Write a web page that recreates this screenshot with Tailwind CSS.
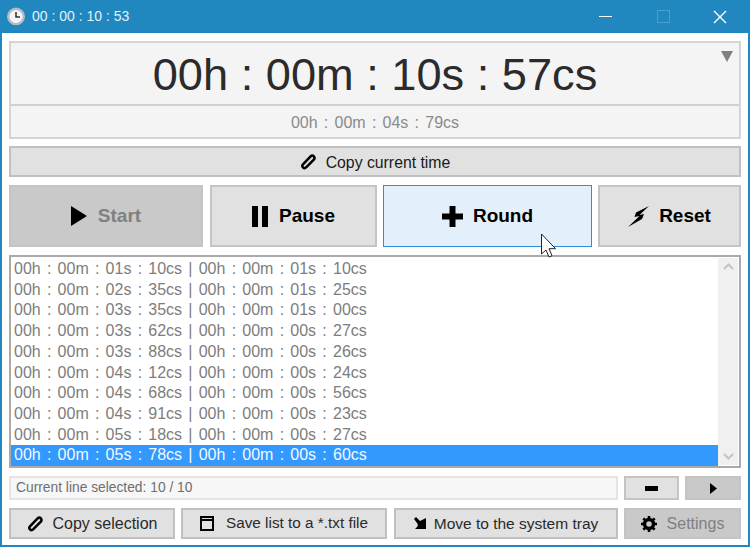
<!DOCTYPE html>
<html lang="en">
<head>
<meta charset="UTF-8">
<title>Stopwatch</title>
<script src="https://cdn.jsdelivr.net/npm/@tailwindcss/browser@4"></script>
</head>
<body class="bg-white font-['Liberation_Sans',sans-serif] overflow-hidden">
<div class="relative w-[750px] h-[547px] flex flex-col border-x-2 border-b-2 border-[#2187bf] bg-white">
  <!-- title bar -->
  <div class="-mx-[2px] h-[33px] shrink-0 bg-[#2187bf] flex items-center text-white">
    <svg class="ml-[6px] w-[20px] h-[20px]" viewBox="0 0 20 20">
      <circle cx="10" cy="9.500" r="9" fill="#b4bcc8"/>
      <circle cx="10" cy="9.500" r="6.500" fill="#f6f6f6"/>
      <path d="M10 5v5h4" fill="none" stroke="#333" stroke-width="1.500"/>
      <path d="M4 18.500h12" stroke="#5a6a9a" stroke-width="1"/>
    </svg>
    <span class="ml-[6px] text-[14px] text-[#e3f1f9]">00 : 00 : 10 : 53</span>
    <div class="ml-auto flex items-center h-full">
      <div class="w-[58px] flex justify-center"><div class="w-[13px] h-[1.5px] bg-white"></div></div>
      <div class="w-[58px] flex justify-center"><div class="w-[13px] h-[13px] border border-[#4a9fce]"></div></div>
      <div class="w-[58px] pr-[2px] flex justify-center">
        <svg class="w-[14px] h-[14px]" viewBox="0 0 14 14"><path d="M1 1l12 12M13 1L1 13" stroke="#fff" stroke-width="1.400"/></svg>
      </div>
    </div>
  </div>

  <div class="flex-1 flex flex-col px-[7px] pt-[8px]">
    <!-- time display -->
    <div class="relative h-[98px] flex flex-col border-2 border-[#d4d4d4] bg-[#f4f4f4]">
      <div class="h-[63px] pt-[3px] flex items-center justify-center border-b-2 border-[#d0d0d0] text-[45.2px] text-[#2b2b2b]">00h : 00m : 10s : 57cs</div>
      <div class="flex-1 pt-[2px] flex items-center justify-center text-[16px] [word-spacing:1.8px] text-[#8a8a8a]">00h : 00m : 04s : 79cs</div>
      <div class="absolute top-[8px] right-[6px] w-0 h-0 border-x-[6px] border-x-transparent border-t-[11px] border-t-[#808080]"></div>
    </div>

    <!-- copy current -->
    <div class="mt-[7px] h-[31px] pt-[2px] flex items-center justify-center gap-[9px] border-2 border-[#c0c0c0] bg-[#e1e1e1] text-[15.8px] text-[#1a1a1a]">
      <svg class="w-[17px] h-[17px] -mt-[2px]" viewBox="0 0 16 16"><path d="M3 10.500L10 3.200c1-1 2.200-1 3 0 .8.8.8 2 0 3L6 13.300c-1 1-2.400 1-3.200.2-.8-.9-.8-2 .2-3z" fill="none" stroke="#000" stroke-width="2.400"/></svg>
      <span>Copy current time</span>
    </div>

    <!-- main buttons -->
    <div class="mt-[8px] h-[62px] flex gap-[6px] text-[19px] font-bold">
      <div class="w-[194px] mr-[1px] flex items-center justify-center gap-[11px] border-2 border-[#c4c4c4] bg-[#c9c9c9] text-[#808080]">
        <svg class="w-[16px] h-[20px]" viewBox="0 0 16 20"><path d="M0 0l16 10L0 20z" fill="#000"/></svg>
        <span>Start</span>
      </div>
      <div class="w-[167px] flex items-center justify-center gap-[11px] border-2 border-[#c4c4c4] bg-[#e1e1e1] text-black">
        <svg class="w-[16px] h-[21px]" viewBox="0 0 16 21"><path d="M0 0h6v21H0zM10 0h6v21h-6z" fill="#000"/></svg>
        <span>Pause</span>
      </div>
      <div class="w-[209px] flex items-center justify-center gap-[10px] border border-[#2d8fdb] bg-[#e3f0fc] text-black">
        <svg class="w-[21px] h-[21px]" viewBox="0 0 21 21"><path d="M7.500 0h6v7.500H21v6h-7.500V21h-6v-7.500H0v-6h7.500z" fill="#000"/></svg>
        <span>Round</span>
      </div>
      <div class="w-[143px] flex items-center justify-center gap-[10px] border-2 border-[#c4c4c4] bg-[#e1e1e1] text-black">
        <svg class="w-[21px] h-[21px]" viewBox="0 0 21 21"><path d="M21 0L8 6.500 6.500 11l5-1L0 21l14-8 2-5-4.500 1z" fill="#000"/></svg>
        <span>Reset</span>
      </div>
    </div>

    <!-- rounds list -->
    <div class="mt-[8px] h-[213px] flex border-2 border-[#aaaaaa] bg-white">
      <div class="flex-1 flex flex-col pt-[2px] text-[16px] leading-[20.7px] [word-spacing:1.78px] text-[#7d7d7d] whitespace-pre">
        <div class="pl-[3px]">00h : 00m : 01s : 10cs | 00h : 00m : 01s : 10cs</div>
        <div class="pl-[3px]">00h : 00m : 02s : 35cs | 00h : 00m : 01s : 25cs</div>
        <div class="pl-[3px]">00h : 00m : 03s : 35cs | 00h : 00m : 01s : 00cs</div>
        <div class="pl-[3px]">00h : 00m : 03s : 62cs | 00h : 00m : 00s : 27cs</div>
        <div class="pl-[3px]">00h : 00m : 03s : 88cs | 00h : 00m : 00s : 26cs</div>
        <div class="pl-[3px]">00h : 00m : 04s : 12cs | 00h : 00m : 00s : 24cs</div>
        <div class="pl-[3px]">00h : 00m : 04s : 68cs | 00h : 00m : 00s : 56cs</div>
        <div class="pl-[3px]">00h : 00m : 04s : 91cs | 00h : 00m : 00s : 23cs</div>
        <div class="pl-[3px]">00h : 00m : 05s : 18cs | 00h : 00m : 00s : 27cs</div>
        <div class="pl-[3px] bg-[#3399ff] text-[#f2f8ff]">00h : 00m : 05s : 78cs | 00h : 00m : 00s : 60cs</div>
      </div>
      <div class="w-[20px] my-[1px] mr-[1px] bg-[#f0f0f0] flex flex-col justify-between items-center py-[5px]">
        <svg class="w-[11px] h-[7px]" viewBox="0 0 11 7"><path d="M1 6l4.500-4.500L10 6" fill="none" stroke="#c4c4c4" stroke-width="2"/></svg>
        <svg class="w-[11px] h-[7px]" viewBox="0 0 11 7"><path d="M1 1l4.500 4.500L10 1" fill="none" stroke="#c4c4c4" stroke-width="2"/></svg>
      </div>
    </div>

    <!-- status row -->
    <div class="mt-[8px] h-[24px] flex gap-[6px]">
      <div class="w-[609px] flex items-center pl-[5px] border-2 border-[#e4e4e4] bg-[#f7f7f7] text-[13.8px] text-[#6e6e6e]">Current line selected: 10 / 10</div>
      <div class="w-[55px] flex items-center justify-center border-2 border-[#c4c4c4] bg-[#e1e1e1]"><div class="w-[13px] h-[5px] bg-black"></div></div>
      <div class="w-[56px] flex items-center justify-center border-2 border-[#c4c4c4] bg-[#c9c9c9]"><svg class="w-[7px] h-[11px]" viewBox="0 0 7 11"><path d="M0 0l7 5.500L0 11z" fill="#000"/></svg></div>
    </div>

    <!-- bottom buttons -->
    <div class="mt-[8px] h-[31px] flex gap-[6px] text-[16px] text-[#2a2a2a]">
      <div class="w-[166px] flex items-center justify-center gap-[9px] border-2 border-[#c0c0c0] bg-[#e1e1e1]">
        <svg class="w-[17px] h-[17px]" viewBox="0 0 16 16"><path d="M3 10.500L10 3.200c1-1 2.200-1 3 0 .8.8.8 2 0 3L6 13.300c-1 1-2.400 1-3.200.2-.8-.9-.8-2 .2-3z" fill="none" stroke="#000" stroke-width="2.400"/></svg>
        <span>Copy selection</span>
      </div>
      <div class="w-[206px] mr-[1px] flex items-center justify-center gap-[12px] border-2 border-[#c0c0c0] bg-[#e1e1e1] text-[15.3px]">
        <svg class="w-[14px] h-[15px]" viewBox="0 0 14 15"><path d="M1 1h12v13H1z" fill="none" stroke="#000" stroke-width="2"/><path d="M1 3h12v2H1z" fill="#000"/></svg>
        <span>Save list to a *.txt file</span>
      </div>
      <div class="w-[224px] flex items-center justify-center gap-[7px] border-2 border-[#c0c0c0] bg-[#e1e1e1] text-[15.5px]">
        <svg class="w-[13px] h-[13px]" viewBox="0 0 13 13"><path d="M0 2l2-2 4 4 6-3v11H1l2-2 1-2-1-2z" fill="#000"/></svg>
        <span>Move to the system tray</span>
      </div>
      <div class="w-[117px] flex items-center justify-center gap-[10px] border-2 border-[#c4c4c4] bg-[#c9c9c9] text-[#808080]">
        <svg class="w-[16px] h-[16px]" viewBox="0 0 16 16"><circle cx="8" cy="8" r="4.500" fill="none" stroke="#000" stroke-width="3.500"/><path d="M8 0v16M0 8h16M2.300 2.300l11.400 11.400M13.700 2.300L2.300 13.700" stroke="#000" stroke-width="2.600" stroke-dasharray="3 10 3 0"/></svg>
        <span>Settings</span>
      </div>
    </div>
  </div>

  <!-- mouse cursor -->
  <svg class="absolute left-[538px] top-[233px] w-[18px] h-[26px]" viewBox="0 0 18 26"><path d="M1.500 1v20l4.500-4 3 7 3-1.300-3-7h6.500z" fill="#fff" stroke="#222" stroke-width="1"/></svg>
</div>
</body>
</html>
